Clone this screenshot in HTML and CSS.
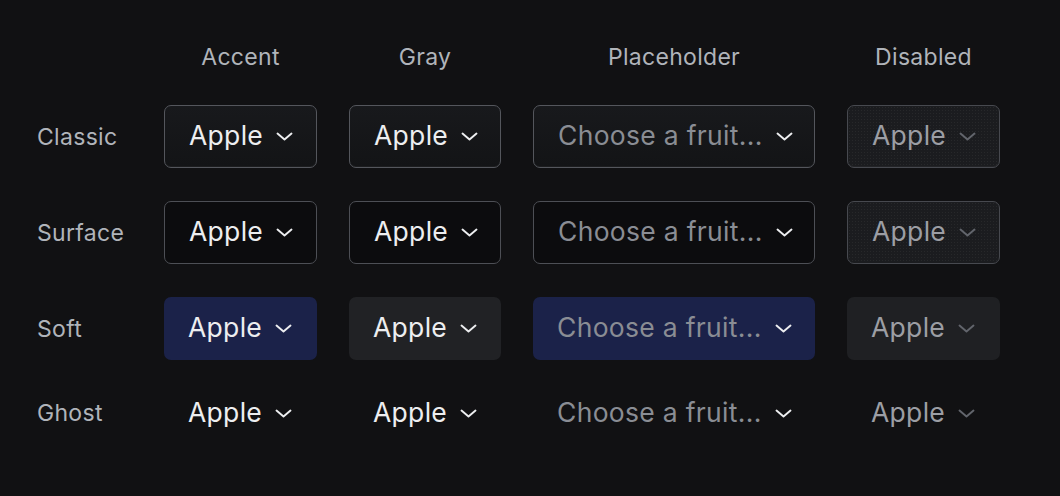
FILE: index.html
```html
<!DOCTYPE html>
<html lang="en">
<head>
<meta charset="utf-8">
<title>Select variants</title>
<link rel="stylesheet" href="styles.css">
</head>
<body>
<div class="grid">
  <div></div>
  <div class="head">Accent</div>
  <div class="head">Gray</div>
  <div class="head">Placeholder</div>
  <div class="head">Disabled</div>

  <div class="label">Classic</div>
  <div class="trigger classic"><span class="value">Apple</span><svg class="chev" viewBox="0 0 17 9"><polyline points="1.5,1.5 8.5,7.5 15.5,1.5"/></svg></div>
  <div class="trigger classic"><span class="value">Apple</span><svg class="chev" viewBox="0 0 17 9"><polyline points="1.5,1.5 8.5,7.5 15.5,1.5"/></svg></div>
  <div class="trigger classic"><span class="value ph">Choose a fruit...</span><svg class="chev" viewBox="0 0 17 9"><polyline points="1.5,1.5 8.5,7.5 15.5,1.5"/></svg></div>
  <div class="trigger classic disabled"><span class="value">Apple</span><svg class="chev" viewBox="0 0 17 9"><polyline points="1.5,1.5 8.5,7.5 15.5,1.5"/></svg></div>

  <div class="label">Surface</div>
  <div class="trigger surface"><span class="value">Apple</span><svg class="chev" viewBox="0 0 17 9"><polyline points="1.5,1.5 8.5,7.5 15.5,1.5"/></svg></div>
  <div class="trigger surface"><span class="value">Apple</span><svg class="chev" viewBox="0 0 17 9"><polyline points="1.5,1.5 8.5,7.5 15.5,1.5"/></svg></div>
  <div class="trigger surface"><span class="value ph">Choose a fruit...</span><svg class="chev" viewBox="0 0 17 9"><polyline points="1.5,1.5 8.5,7.5 15.5,1.5"/></svg></div>
  <div class="trigger surface disabled"><span class="value">Apple</span><svg class="chev" viewBox="0 0 17 9"><polyline points="1.5,1.5 8.5,7.5 15.5,1.5"/></svg></div>

  <div class="label">Soft</div>
  <div class="trigger soft-accent"><span class="value">Apple</span><svg class="chev" viewBox="0 0 17 9"><polyline points="1.5,1.5 8.5,7.5 15.5,1.5"/></svg></div>
  <div class="trigger soft-gray"><span class="value">Apple</span><svg class="chev" viewBox="0 0 17 9"><polyline points="1.5,1.5 8.5,7.5 15.5,1.5"/></svg></div>
  <div class="trigger soft-accent"><span class="value ph">Choose a fruit...</span><svg class="chev" viewBox="0 0 17 9"><polyline points="1.5,1.5 8.5,7.5 15.5,1.5"/></svg></div>
  <div class="trigger soft-gray disabled"><span class="value">Apple</span><svg class="chev" viewBox="0 0 17 9"><polyline points="1.5,1.5 8.5,7.5 15.5,1.5"/></svg></div>

  <div class="label">Ghost</div>
  <div class="trigger ghost"><span class="value">Apple</span><svg class="chev" viewBox="0 0 17 9"><polyline points="1.5,1.5 8.5,7.5 15.5,1.5"/></svg></div>
  <div class="trigger ghost"><span class="value">Apple</span><svg class="chev" viewBox="0 0 17 9"><polyline points="1.5,1.5 8.5,7.5 15.5,1.5"/></svg></div>
  <div class="trigger ghost"><span class="value ph">Choose a fruit...</span><svg class="chev" viewBox="0 0 17 9"><polyline points="1.5,1.5 8.5,7.5 15.5,1.5"/></svg></div>
  <div class="trigger ghost disabled"><span class="value">Apple</span><svg class="chev" viewBox="0 0 17 9"><polyline points="1.5,1.5 8.5,7.5 15.5,1.5"/></svg></div>
</div>
</body>
</html>
```

FILE: styles.css
```css
html, body {
  margin: 0;
  padding: 0;
  background: #111113;
  height: 100%;
}

body {
  font-family: Inter, "Noto Sans", "Liberation Sans", sans-serif;
  color: #edeef0;
}

.grid {
  display: grid;
  grid-template-columns: 95px 153px 152px 282px 153px;
  grid-template-rows: 30px 63px 63px 63px 40px;
  column-gap: 32px;
  row-gap: 33px;
  padding: 42px 0 0 37px;
  align-items: center;
}

.head {
  text-align: center;
  font-size: 23px;
  letter-spacing: 0.3px;
  color: #b0b4ba;
  line-height: 30px;
}

.label {
  font-size: 23px;
  letter-spacing: 0.3px;
  color: #b0b4ba;
  line-height: 30px;
}

.trigger {
  box-sizing: border-box;
  height: 63px;
  display: flex;
  align-items: center;
  padding: 0 24px 0 24px;
  gap: 13px;
  border-radius: 7px;
  font-size: 26.5px;
  letter-spacing: 0.3px;
  color: #edeef0;
  white-space: nowrap;
}

.value {
  flex: 1;
  line-height: 32px;
  margin-top: -3px;
}

.value.ph {
  color: #8a8d94;
}

.chev {
  width: 17px;
  height: 9px;
  flex: none;
  margin-right: 2px;
}

.chev polyline {
  fill: none;
  stroke: #edeef0;
  stroke-width: 1.9;
  stroke-linecap: round;
  stroke-linejoin: round;
}

.classic {
  border: 1px solid #54565c;
  background: linear-gradient(#18191c, #131416);
  box-shadow: inset 0 -1px 0 rgba(255, 255, 255, 0.04);
}

.surface {
  border: 1px solid #4d4f55;
  background: #0c0c0e;
}

.soft-accent {
  background: #1b2249;
}

.soft-gray {
  background: #212225;
}

.ghost {
  height: 40px;
  background: transparent;
}

.trigger.disabled {
  color: #9c9ea4;
}

.trigger.disabled .chev polyline {
  stroke: #62656c;
}

.classic.disabled,
.surface.disabled {
  border-color: #47494f;
  background-color: #1b1c1f;
  background-image: radial-gradient(rgba(255, 255, 255, 0.05) 0.8px, transparent 1px);
  background-size: 3px 3px;
}

.soft-gray.disabled {
  background: #1f2023;
}

.ghost.disabled {
  background: transparent;
}
```
